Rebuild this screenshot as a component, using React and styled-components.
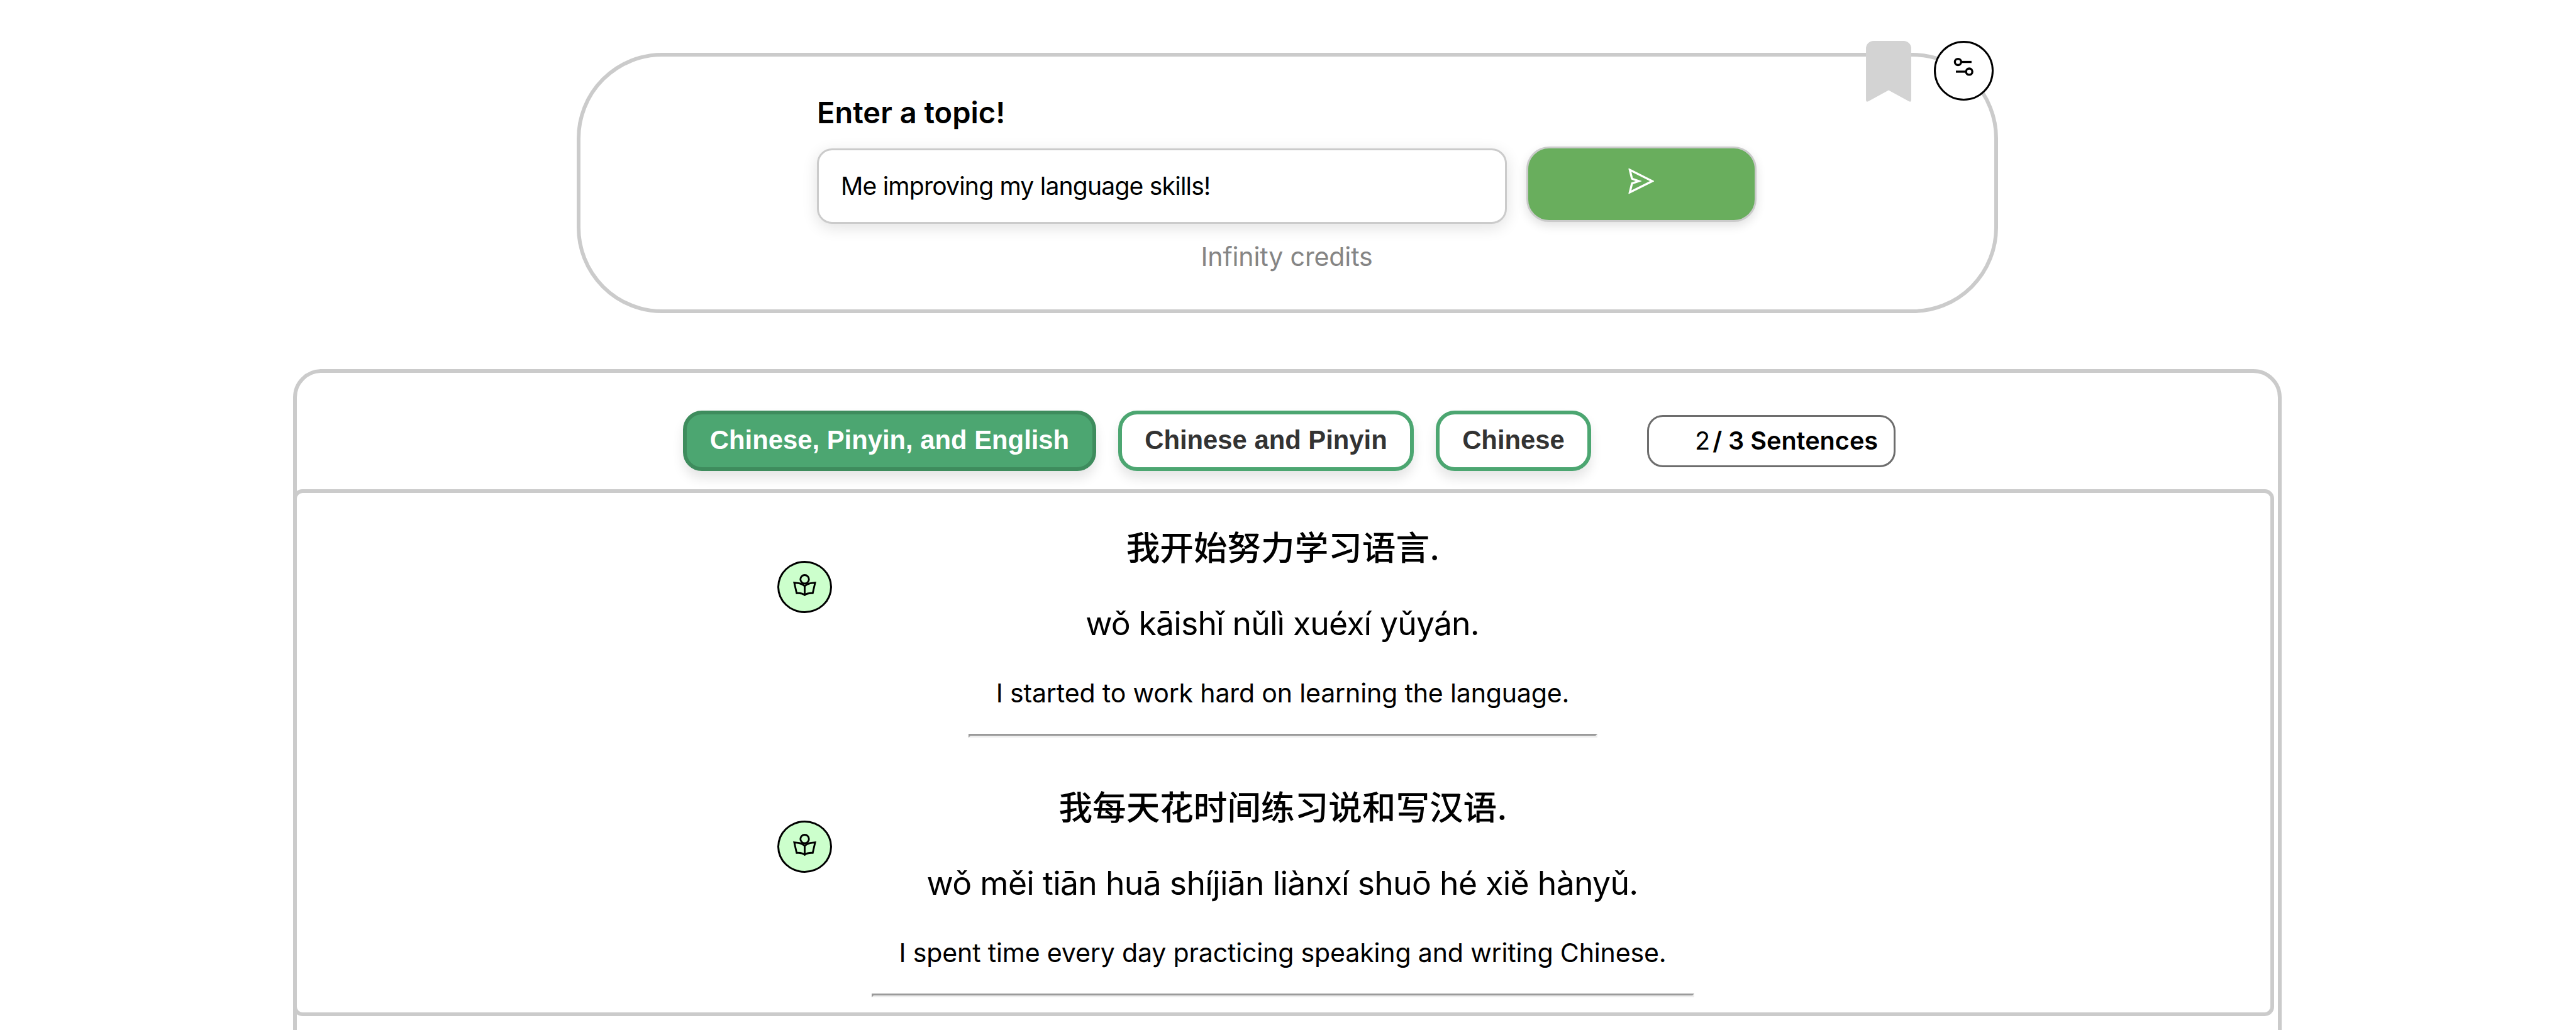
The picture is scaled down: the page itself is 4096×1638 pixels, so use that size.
import React from "react";
import styled, { createGlobalStyle } from "styled-components";
import { AiOutlineSend } from "react-icons/ai";

const GlobalStyle = createGlobalStyle`
  *, *::before, *::after { box-sizing: border-box; }
  body {
    margin: 0;
    background: #fff;
    color: #000;
    font-family: Inter, "Noto Sans CJK SC", sans-serif;
  }
  p, h2 { margin: 0; font-weight: 400; }
`;

const Page = styled.main`
  display: flex;
  flex-direction: column;
  width: 4096px;
  height: 1638px;
  padding-top: 84px;
  overflow: hidden;
`;

/* Topic card */

const TopicCard = styled.section`
  position: relative;
  flex: none;
  width: 2260px;
  height: 414px;
  margin-left: 917px;
  padding-top: 59px;
  border: 6px solid #cbcbcb;
  border-radius: 136px;
`;

const CardCorner = styled.div`
  position: absolute;
  top: -25px;
  right: 1px;
  display: flex;
  gap: 36px;
`;

const BookmarkIcon = styled.svg`
  display: block;
  width: 72px;
  height: 97px;
  fill: #d3d3d3;
`;

const SettingsButton = styled.button`
  display: flex;
  justify-content: center;
  width: 95px;
  height: 95px;
  padding: 20px 0 0;
  border: 3px solid #000;
  border-radius: 50%;
  background: #fff;
`;

const SettingsIcon = styled.svg`
  width: 38px;
  height: 36px;
  margin-right: 1px;
  fill: none;
  stroke: #000;
  stroke-width: 3.9;
`;

const TopicForm = styled.form`
  display: flex;
  flex-direction: column;
  gap: 24px;
  padding-left: 376px;
`;

const TopicTitle = styled.h2`
  font-size: 47px;
  font-weight: 600;
  line-height: 60px;
`;

const FieldRow = styled.div`
  display: flex;
  gap: 31px;
`;

const TopicInput = styled.input`
  width: 1097px;
  height: 120px;
  margin: 3px 0 0;
  padding: 0 0 2px 35px;
  border: 3px solid #cbcbcb;
  border-radius: 24px;
  background: #fff;
  color: #000;
  font: 400 39.1px Inter, sans-serif;
  letter-spacing: -0.8px;
  outline: none;
  box-shadow: 0 6px 24px rgba(0, 0, 0, 0.12);
`;

const SendButton = styled.button`
  display: flex;
  justify-content: center;
  width: 366px;
  height: 120px;
  padding: 28px 0 0;
  border: 3px solid #cbcbcb;
  border-radius: 36px;
  background: #69ae5d;
  color: #fff;
  font-size: 48px;
  box-shadow: 0 6px 16px rgba(0, 0, 0, 0.12);
`;

const Credits = styled.p`
  margin-top: 27px;
  padding-right: 2px;
  color: #858585;
  font-size: 41.1px;
  line-height: 50px;
  letter-spacing: -0.16px;
  text-align: center;
`;

/* Results */

const Results = styled.section`
  flex: none;
  width: 3162px;
  height: 1100px;
  margin: 89px 0 0 466px;
  border: 6px solid #cbcbcb;
  border-radius: 45px;
`;

const Toolbar = styled.header`
  display: flex;
  align-items: center;
  height: 185px;
  padding: 31px 0 0 614px;
`;

const ModeTab = styled.button`
  height: 96px;
  margin-right: 35px;
  padding: 0 0 3px;
  width: ${(p) => p.$width}px;
  border: 6px solid ${(p) => (p.$active ? "#3e8c5d" : "#4ca671")};
  border-radius: 30px;
  background: ${(p) => (p.$active ? "#4ca671" : "#fff")};
  color: ${(p) => (p.$active ? "#fff" : "#333")};
  font: 700 41.8px "Liberation Sans", sans-serif;
  white-space: nowrap;
  box-shadow: 0 12px 18px rgba(0, 0, 0, 0.1);
`;

const Counter = styled.div`
  display: flex;
  align-items: center;
  gap: 4px;
  width: 395px;
  height: 83px;
  margin-left: 54px;
  padding-left: 73px;
  border: 3px solid #6d6d6d;
  border-radius: 25px;
  font-size: 39.6px;
  font-weight: 600;
  line-height: 50px;
  white-space: nowrap;
`;

const Current = styled.span`
  font-weight: 400;
`;

const SentenceList = styled.ul`
  width: 3150px;
  height: 838px;
  margin: 0 0 0 -6px;
  padding: 48px 0 0;
  border: 6px solid #cbcbcb;
  border-radius: 15px;
  list-style: none;
`;

const SentenceRow = styled.li`
  display: grid;
  height: 412.5px;
`;

const ReadButton = styled.button`
  grid-area: 1 / 1;
  display: flex;
  justify-content: center;
  width: 87px;
  height: 83px;
  margin: 60px 0 0 764px;
  padding: 15px 0 0;
  border: 3px solid #000;
  border-radius: 50%;
  background: #ccffcc;
`;

const ReaderIcon = styled.svg`
  flex: none;
  width: 45px;
  height: 41.5px;
  fill: none;
  stroke: #000;
  stroke-width: 3.3;
`;

const Sentence = styled.div`
  grid-area: 1 / 1;
  justify-self: center;
  display: flex;
  flex-direction: column;
  align-items: center;
  margin-right: 2px;
  white-space: nowrap;
`;

const Hanzi = styled.p`
  font-size: 53.6px;
  font-weight: 500;
  line-height: 80px;
`;

const Pinyin = styled.p`
  margin-top: 39px;
  padding-right: 2px;
  font-size: 51.7px;
  line-height: 80px;
  letter-spacing: ${(p) => p.$tracking}px;
`;

const English = styled.p`
  margin-top: 41px;
  padding: 0 45px 0 44px;
  font-size: 41.1px;
  line-height: 60px;
  letter-spacing: -0.18px;
`;

const Divider = styled.hr`
  align-self: stretch;
  height: 6px;
  margin: 35px 0 0;
  border-width: 3px;
  border-style: solid;
  border-color: #9a9a9a #eee #eee #9a9a9a;
`;

const modes = [
  { label: "Chinese, Pinyin, and English", width: 657, active: true },
  { label: "Chinese and Pinyin", width: 470 },
  { label: "Chinese", width: 247 },
];

const sentences = [
  {
    hanzi: "我开始努力学习语言.",
    pinyin: "wǒ kāishǐ nǔlì xuéxí yǔyán.",
    tracking: -0.837,
    english: "I started to work hard on learning the language.",
  },
  {
    hanzi: "我每天花时间练习说和写汉语.",
    pinyin: "wǒ měi tiān huā shíjiān liànxí shuō hé xiě hànyǔ.",
    tracking: -0.704,
    english: "I spent time every day practicing speaking and writing Chinese.",
  },
];

export default function App() {
  return (
    <Page>
      <GlobalStyle />
      <TopicCard>
        <TopicForm>
          <TopicTitle>Enter a topic!</TopicTitle>
          <FieldRow>
            <TopicInput defaultValue="Me improving my language skills!" />
            <SendButton type="button" aria-label="Send">
              <AiOutlineSend />
            </SendButton>
          </FieldRow>
        </TopicForm>
        <Credits>Infinity credits</Credits>
        <CardCorner>
          <BookmarkIcon viewBox="0 0 83 112">
            <path d="M14 0H69A14 14 0 0 1 83 14V108Q83 113 79 111L41.5 90.5L4 111Q0 113 0 108V14A14 14 0 0 1 14 0Z" />
          </BookmarkIcon>
          <SettingsButton type="button" aria-label="Settings">
            <SettingsIcon viewBox="0 0 44 42">
              <circle cx="11.9" cy="12.3" r="5.8" />
              <path d="M18 12.3H37" />
              <circle cx="32.7" cy="30.3" r="5.8" />
              <path d="M8 30.3H27" />
            </SettingsIcon>
          </SettingsButton>
        </CardCorner>
      </TopicCard>

      <Results>
        <Toolbar>
          {modes.map((m) => (
            <ModeTab key={m.label} $width={m.width} $active={m.active}>
              {m.label}
            </ModeTab>
          ))}
          <Counter>
            <Current>2</Current>
            <span>/ 3 Sentences</span>
          </Counter>
        </Toolbar>
        <SentenceList>
          {sentences.map((s) => (
            <SentenceRow key={s.english}>
              <ReadButton aria-label="Read">
                <ReaderIcon viewBox="0 0 52 48">
                  <circle cx="26" cy="13" r="7.8" />
                  <path d="M6.8 19.2L16 20.3Q22.5 21.8 26 25.6Q29.5 21.8 36 20.3L45.2 19.2L40.8 38.5Q31 38 26 41.8Q21 38 11.2 38.5Z" />
                  <path d="M26 25V43.3" />
                </ReaderIcon>
              </ReadButton>
              <Sentence>
                <Hanzi lang="zh-Hans">{s.hanzi}</Hanzi>
                <Pinyin $tracking={s.tracking}>{s.pinyin}</Pinyin>
                <English>{s.english}</English>
                <Divider />
              </Sentence>
            </SentenceRow>
          ))}
        </SentenceList>
      </Results>
    </Page>
  );
}
